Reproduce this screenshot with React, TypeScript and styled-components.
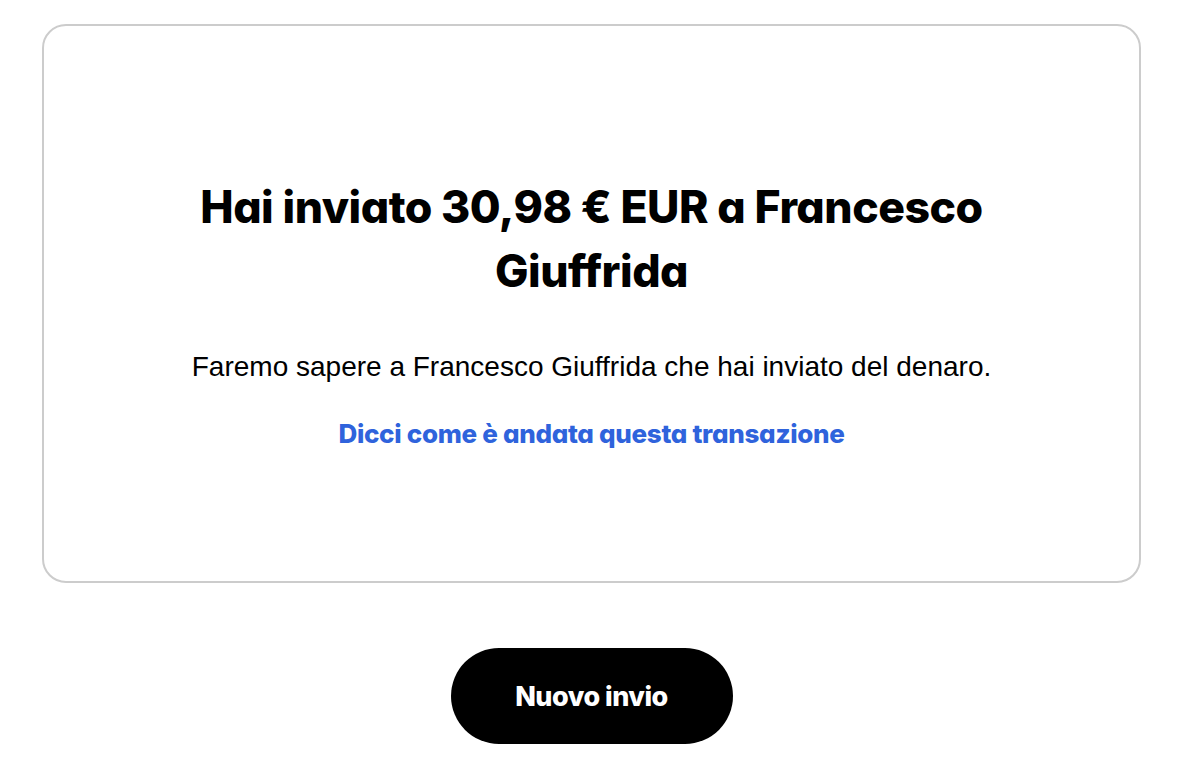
import styled, { createGlobalStyle } from "styled-components";

const GlobalStyle = createGlobalStyle`
  * {
    box-sizing: border-box;
  }

  body {
    margin: 0;
    background: #ffffff;
    font-family: "Inter", "Liberation Sans", sans-serif;
    color: #000000;
  }
`;

function App() {
  return (
    <>
      <GlobalStyle />
      <Page>
        <Card>
          <Title>Hai inviato 30,98 € EUR a Francesco Giuffrida</Title>
          <Message>
            Faremo sapere a Francesco Giuffrida che hai inviato del denaro.
          </Message>
          <FeedbackLink href="#">Dicci come è andata questa transazione</FeedbackLink>
        </Card>
        <PrimaryButton type="button">Nuovo invio</PrimaryButton>
      </Page>
    </>
  );
}

export default App;

const Page = styled.main`
  display: flex;
  flex-direction: column;
  align-items: center;
  padding: 24px 41px 30px 42px;
`;

const Card = styled.section`
  width: 100%;
  height: 559px;
  display: flex;
  flex-direction: column;
  align-items: center;
  justify-content: center;
  padding: 18px 120px 0;
  border: 2px solid #cccccc;
  border-radius: 24px;
  text-align: center;
`;

const Title = styled.h1`
  margin: 0;
  max-width: 820px;
  font-family: "Inter", sans-serif;
  font-size: 44.6px;
  font-weight: 800;
  line-height: 64px;
  letter-spacing: -0.5px;
  font-feature-settings: "cv11" 1;
`;

const Message = styled.p`
  margin: 47px 0 0;
  font-family: "Liberation Sans", Arial, sans-serif;
  font-size: 28px;
  line-height: 34px;
`;

const FeedbackLink = styled.a`
  margin-top: 34px;
  font-family: "Inter", sans-serif;
  font-size: 26px;
  font-weight: 800;
  line-height: 32px;
  color: #2f63dc;
  text-decoration: none;
  letter-spacing: -0.3px;
  font-feature-settings: "cv11" 1;
`;

const PrimaryButton = styled.button`
  margin-top: 65px;
  width: 282px;
  height: 96px;
  border: none;
  border-radius: 48px;
  background: #000000;
  color: #ffffff;
  font-family: "Inter", sans-serif;
  font-size: 27px;
  font-weight: 800;
  letter-spacing: -0.5px;
  font-feature-settings: "cv11" 1;
  cursor: pointer;
`;
